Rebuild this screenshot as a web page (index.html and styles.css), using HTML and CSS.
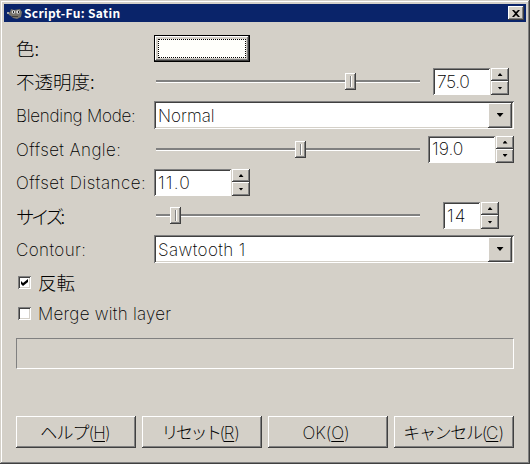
FILE: index.html
```html
<!DOCTYPE html>
<html lang="ja">
<head>
<meta charset="utf-8">
<title>Script-Fu: Satin</title>
<link rel="stylesheet" href="styles.css">
</head>
<body>
<div class="window">
  <header class="titlebar">
    <svg class="app-icon" width="16" height="14" viewBox="0 0 16 14"><path d="M2 7 4 6l1-3 3 1 6-1 2 3-1 5-4 2-4-1-2-2-2-1z" fill="#77736a"/><circle cx="7.5" cy="6" r="1.8" fill="#ddd"/><circle cx="12" cy="6" r="1.8" fill="#ddd"/><path d="M7 5h1v2H7zM12 5h1v2h-1z" fill="#222"/><path d="M1 6h2v2H1z" fill="#aaa"/><path d="M6 10h6v1H6z" fill="#45413a"/></svg>
    <h1>Script-Fu: Satin</h1>
    <button class="close" aria-label="Close"><svg width="8" height="7" viewBox="0 0 8 7"><path d="M0 0h2l2 2 2-2h2L5 3.5 8 7H6L4 5 2 7H0l3-3.5z"/></svg></button>
  </header>
  <main>
    <div class="form">
      <label class="jp">色:</label><button class="color" aria-label="色"><span></span></button>
      <label class="jp">不透明度:</label>
      <div class="scale-row"><div class="scale at75"><i></i></div><div class="spin w75"><span class="entry num">75.0</span><span class="arrows"><b class="up"></b><b class="down"></b></span></div></div>
      <label class="blending">Blending Mode:</label><div class="combo"><span class="normal">Normal</span><b class="drop"></b></div>
      <label class="angle">Offset Angle:</label>
      <div class="scale-row"><div class="scale at19"><i></i></div><div class="spin w19"><span class="entry num">19.0</span><span class="arrows"><b class="up"></b><b class="down"></b></span></div></div>
      <label class="distance">Offset Distance:</label>
      <div class="spin w11"><span class="entry num">11.0</span><span class="arrows"><b class="up"></b><b class="down"></b></span></div>
      <label class="jp size">サイズ:</label>
      <div class="scale-row"><div class="scale at14"><i></i></div><div class="spin w14"><span class="entry num">14</span><span class="arrows"><b class="up"></b><b class="down"></b></span></div></div>
      <label class="contour">Contour:</label><div class="combo"><span class="saw">Sawtooth 1</span><b class="drop"></b></div>
    </div>
    <div class="checks">
      <label><span class="box"><svg width="7" height="7" viewBox="0 0 7 7"><path d="M0 2l2 2 5-4v3L2 7 0 5z"/></svg></span><span class="jp">反転</span></label>
      <label><span class="box"></span><span class="merge">Merge with layer</span></label>
    </div>
    <div class="progress"></div>
    <footer>
      <button><span class="help">ヘルプ(<u>H</u>)</span></button>
      <button><span class="reset">リセット(<u>R</u>)</span></button>
      <button><span class="ok">OK(<u>O</u>)</span></button>
      <button><span class="cancel">キャンセル(<u>C</u>)</span></button>
    </footer>
  </main>
</div>
</body>
</html>
```
FILE: styles.css
```css
* { box-sizing: border-box; }
body { margin: 0; background: #d4d0c8; color: #000; }
body, button { font: 250 17px/20px Inter, "Noto Sans CJK JP", sans-serif; }
button { padding: 0; border: 0; border-radius: 0; background: #d4d0c8; color: #000; }
.window {
  width: 530px; height: 464px; padding: 4px; border: 0; background: #d4d0c8;
  box-shadow: inset -1px -1px #404040, inset 1px 1px #d4d0c8, inset -2px -2px #808080, inset 2px 2px #fff;
}
.titlebar { height: 18px; display: flex; align-items: center; padding: 0 2px; background: #0a246a; color: #fff; }
.app-icon { margin-left: 0; }
h1 { margin: 0 auto 0 2px; font: 700 12px/18px "Noto Sans CJK JP", sans-serif; letter-spacing: .35px; white-space: nowrap; }
.close {
  width: 16px; height: 14px; display: grid; place-items: center; background: #d4d0c8;
  box-shadow: inset -1px -1px #404040, inset 1px 1px #fff, inset -2px -2px #808080;
}
main { padding: 13px 12px 0; }
.form {
  display: grid; grid-template-columns: 138px 360px;
  grid-template-rows: 27px 27px 28px 28px 27px 27px 28px; row-gap: 6px; align-items: center;
}
.form > label { white-space: nowrap; }
.jp { font: 300 18.5px/24px "Noto Sans CJK JP", sans-serif; }
.form > .jp { padding-bottom: 2px; }
.form > .size { letter-spacing: -3.5px; padding-bottom: 0; }
.blending, .angle, .contour { padding-top: 2px; }
.blending { letter-spacing: -.25px; }
.angle { letter-spacing: .4px; }
.distance { letter-spacing: .45px; }
.contour { letter-spacing: .4px; }
.saw { letter-spacing: .4px; }
.merge { letter-spacing: .25px; }
.color { width: 96px; height: 27px; padding: 4px; border: 1px solid #000; box-shadow: inset -1px -1px #404040, inset 1px 1px #fff, inset -2px -2px #808080; }
.color span { display: block; margin: -1px; height: 19px; border: 1px dotted #000; background: #fffffb; }
.scale-row { height: 27px; display: flex; align-items: center; }
.scale { width: 264px; height: 17px; margin-left: 2px; display: flex; align-items: center; background: linear-gradient(#808080 0 2px, #fff 2px 3px) 0 7px / 100% 3px no-repeat; }
.scale i { width: 11px; height: 17px; background: linear-gradient(90deg, #808080 0 1px, #fff 1px) 5px 3px / 2px 11px no-repeat #d4d0c8; box-shadow: inset -1px -1px #404040, inset 1px 1px #fff, inset -2px -2px #808080; }
.at75 i { margin-left: 189px; }
.at19 i { margin-left: 139px; }
.at14 i { margin-left: 14px; }
.spin { height: 27px; display: flex; gap: 1px; }
.entry { flex: 1; display: flex; align-items: center; padding-left: 4px; background: #fff; box-shadow: inset 1px 1px #808080, inset -1px -1px #fff, inset 2px 2px #404040; }
.num { font-size: 17.5px; }
.w75 { width: 76px; margin-left: 13px; }
.w75 .num { letter-spacing: -.4px; }
.w19 { width: 86px; margin-left: 8px; }
.w11 { width: 96px; }
.w11 .num { letter-spacing: 1.2px; }
.w14 { width: 56px; margin-left: 23px; }
.w14 .num { letter-spacing: 1px; }
.arrows { width: 18px; display: grid; grid-template-rows: 13px 14px; }
.arrows b, .drop { display: grid; place-items: center; background: #d4d0c8; box-shadow: inset -1px -1px #404040, inset 1px 1px #fff, inset -2px -2px #808080; }
.arrows b::before, .drop::before { content: ""; width: 7px; height: 4px; background: #000; clip-path: polygon(0 0, 100% 0, 50% 100%); }
.arrows b::before { width: 5px; height: 3px; }
.arrows .up::before { clip-path: polygon(50% 0, 100% 100%, 0 100%); }
.combo { height: 28px; display: flex; align-items: center; justify-content: space-between; padding: 2px 2px 2px 4px; background: #fff; box-shadow: inset 1px 1px #808080, inset -1px -1px #fff, inset 2px 2px #404040, inset -2px -2px #d4d0c8; }
.combo span { padding-top: 2px; }
.drop { width: 24px; height: 25px; }
.checks { padding-top: 7px; display: grid; grid-template-rows: 24px 24px; row-gap: 7px; }
.checks label { display: flex; align-items: center; gap: 7px; padding-left: 2px; }
.merge { padding-top: 2px; }
.box { width: 13px; height: 13px; display: grid; place-items: center; background: #fff; box-shadow: inset 1px 1px #808080, inset -1px -1px #fff, inset 2px 2px #404040, inset -2px -2px #d4d0c8; }
.progress { height: 31px; margin-top: 13px; width: 498px; border: 1px solid #808080; border-right-color: #fff; border-bottom-color: #fff; }
footer { margin-top: 47px; display: grid; grid-template-columns: repeat(4, 120px); gap: 6px; }
footer button { height: 32px; padding: 1px 2px 0 0; box-shadow: inset -1px -1px #404040, inset 1px 1px #fff, inset -2px -2px #808080; white-space: nowrap; }
.help { letter-spacing: -.9px; }
.reset { letter-spacing: -2.5px; margin-right: 3px; }
.ok { letter-spacing: -.1px; margin-right: 2px; }
.cancel { letter-spacing: -1.3px; }
.reset u { margin-left: 1px; letter-spacing: 0; }
.cancel u { letter-spacing: 0; }
u { text-decoration-thickness: 1px; text-underline-offset: 2px; }
```
